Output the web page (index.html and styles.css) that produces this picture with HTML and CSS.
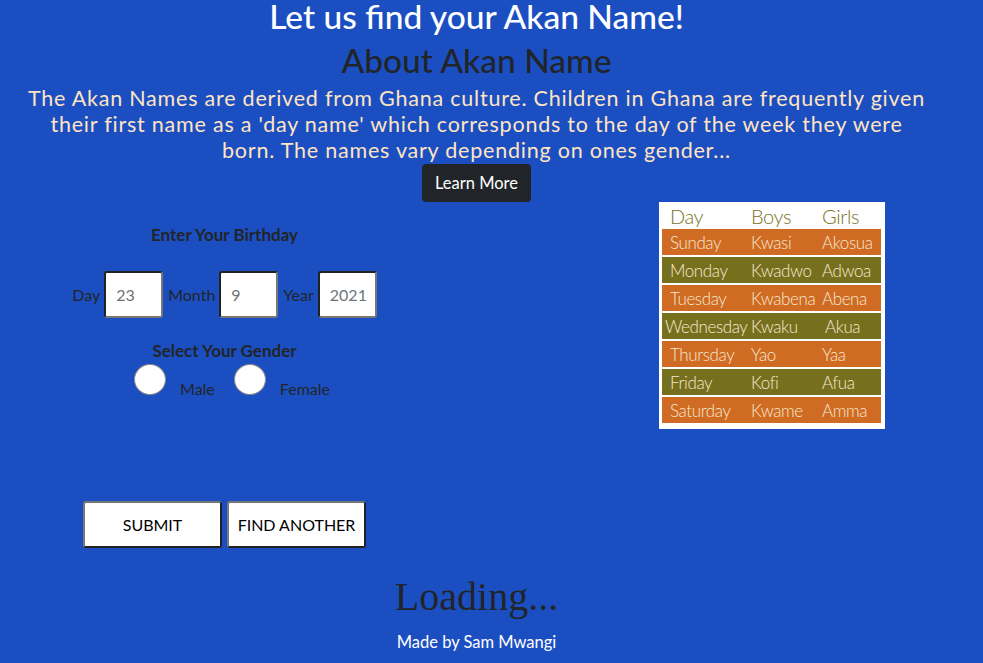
FILE: index.html
```html
<!DOCTYPE html>
<html lang="en">
<head>
<meta charset="utf-8">
<title>Akan Names</title>
<link rel="stylesheet" href="styles.css">
</head>
<body>
<div class="page">
  <header class="intro">
    <h1 class="title">Let us find your Akan Name!</h1>
    <h2 class="subtitle">About Akan Name</h2>
    <p class="lead">The Akan Names are derived from Ghana culture. Children in Ghana are frequently given<br>their first name as a 'day name' which corresponds to the day of the week they were<br>born. The names vary depending on ones gender...</p>
    <a class="btn-learn" href="#">Learn More</a>
  </header>

  <main class="content">
    <form class="form">
      <h3 class="form-heading">Enter Your Birthday</h3>
      <div class="date-row">
        <label class="date-label">Day</label>
        <input class="field" type="text" value="23">
        <label class="date-label">Month</label>
        <input class="field" type="text" value="9">
        <label class="date-label">Year</label>
        <input class="field" type="text" value="2021">
      </div>
      <h3 class="form-heading gender-heading">Select Your Gender</h3>
      <div class="gender-row">
        <span class="radio"></span><span class="radio-label">Male</span>
        <span class="radio radio-second"></span><span class="radio-label">Female</span>
      </div>
      <div class="actions">
        <button class="btn-plain" type="button">SUBMIT</button>
        <button class="btn-plain" type="button">FIND ANOTHER</button>
      </div>
    </form>

    <div class="chart">
      <div class="chart-row chart-head"><span>Day</span><span>Boys</span><span>Girls</span></div>
      <div class="chart-row orange"><span>Sunday</span><span>Kwasi</span><span>Akosua</span></div>
      <div class="chart-row olive"><span>Monday</span><span>Kwadwo</span><span>Adwoa</span></div>
      <div class="chart-row orange"><span>Tuesday</span><span>Kwabena</span><span>Abena</span></div>
      <div class="chart-row olive wed"><span>Wednesday</span><span>Kwaku</span><span>Akua</span></div>
      <div class="chart-row orange"><span>Thursday</span><span>Yao</span><span>Yaa</span></div>
      <div class="chart-row olive"><span>Friday</span><span>Kofi</span><span>Afua</span></div>
      <div class="chart-row orange"><span>Saturday</span><span>Kwame</span><span>Amma</span></div>
    </div>
  </main>

  <div class="loading">Loading...</div>
  <footer class="footer">Made by Sam Mwangi</footer>
</div>
</body>
</html>
```

FILE: styles.css
```css
html, body {
  margin: 0;
  padding: 0;
}

body {
  background: #1b4fc1;
  font-family: "Lato", "Noto Sans", sans-serif;
  color: #212529;
  width: 983px;
  height: 663px;
  overflow: hidden;
}

.page {
  width: 953px;
}

.intro {
  display: flex;
  flex-direction: column;
  align-items: center;
  text-align: center;
}

.title {
  margin: 0;
  font-size: 33.5px;
  font-weight: 500;
  line-height: 32px;
  color: #ffffff;
}

.subtitle {
  margin: 12px 0 0;
  font-size: 33.5px;
  font-weight: 500;
  line-height: 32px;
  color: #212529;
}

.lead {
  margin: 9px 0 0;
  font-family: "Lato", "Noto Sans", sans-serif;
  font-size: 21.5px;
  letter-spacing: 0.78px;
  line-height: 26px;
  color: #ffe4c4;
  white-space: nowrap;
}

.btn-learn {
  margin-top: 1px;
  box-sizing: border-box;
  height: 38px;
  display: inline-flex;
  align-items: center;
  background: #212529;
  color: #ffffff;
  text-decoration: none;
  font-size: 16.5px;
  padding: 0 13px;
  border-radius: 4px;
}

.content {
  display: grid;
  grid-template-columns: 449px 1fr;
}

.form {
  display: flex;
  flex-direction: column;
  align-items: center;
  margin: 0;
}

.form-heading {
  margin: 23px 0 0;
  font-size: 17px;
  font-weight: 700;
  line-height: 20px;
  color: #212529;
}

.date-row {
  display: flex;
  align-items: center;
  margin-top: 26px;
}

.date-label {
  font-size: 16px;
  line-height: 20px;
  color: #212529;
  margin: 0 4px 0 5px;
}

.date-label:first-child {
  margin-left: 0;
}

.field {
  box-sizing: border-box;
  width: 59px;
  height: 47px;
  padding: 0 0 0 10px;
  border-style: solid;
  border-width: 2px;
  border-color: #222222 #777777 #777777 #222222;
  border-radius: 3px;
  background: #ffffff;
  font-family: "Lato", "Noto Sans", sans-serif;
  font-size: 16px;
  color: #6f7378;
}

.gender-heading {
  margin-top: 23px;
}

.gender-row {
  display: flex;
  align-items: flex-end;
  margin-top: 3px;
  margin-left: 15px;
}

.radio {
  box-sizing: border-box;
  width: 32px;
  height: 31px;
  border-radius: 50%;
  background: #ffffff;
  border: 1px solid #8a8a8a;
}

.radio-second {
  margin-left: 19px;
}

.radio-label {
  margin-left: 14px;
  font-size: 16px;
  line-height: 16px;
  margin-bottom: -2px;
  color: #212529;
}

.actions {
  display: flex;
  gap: 5px;
  margin-top: 106px;
}

.btn-plain {
  box-sizing: border-box;
  width: 139px;
  height: 47px;
  background: #ffffff;
  border-style: solid;
  border-width: 2px;
  border-color: #777777 #222222 #222222 #777777;
  border-radius: 3px;
  font-family: "Lato", "Noto Sans", sans-serif;
  font-size: 16px;
  color: #000000;
  padding: 0;
}

.chart {
  margin-left: 210px;
  width: 226px;
  box-sizing: border-box;
  background: #ffffff;
  padding: 0 4px 6px 3px;
  display: flex;
  flex-direction: column;
  gap: 2px;
  align-self: start;
}

.chart-row {
  display: grid;
  grid-template-columns: 81px 71px 1fr;
  height: 26px;
  align-items: center;
  padding-left: 8px;
  font-family: "Lato", sans-serif;
  font-weight: 300;
  font-size: 17px;
  letter-spacing: -0.4px;
  color: #f6e8cf;
  white-space: nowrap;
}

.chart-head {
  height: 25px;
  color: #7b7226;
  font-size: 20px;
  padding-top: 2px;
  box-sizing: border-box;
}

.orange {
  background: #cf6b22;
}

.olive {
  background: #76701e;
}

.wed {
  padding-left: 3px;
  grid-template-columns: 86px 74px 1fr;
}

.loading {
  margin-top: 29px;
  text-align: center;
  font-family: "Liberation Serif", "Times New Roman", serif;
  font-size: 40px;
  line-height: 40px;
  color: #212529;
}

.footer {
  margin-top: 15px;
  text-align: center;
  font-size: 16.5px;
  line-height: 20px;
  color: #ffffff;
}
```
